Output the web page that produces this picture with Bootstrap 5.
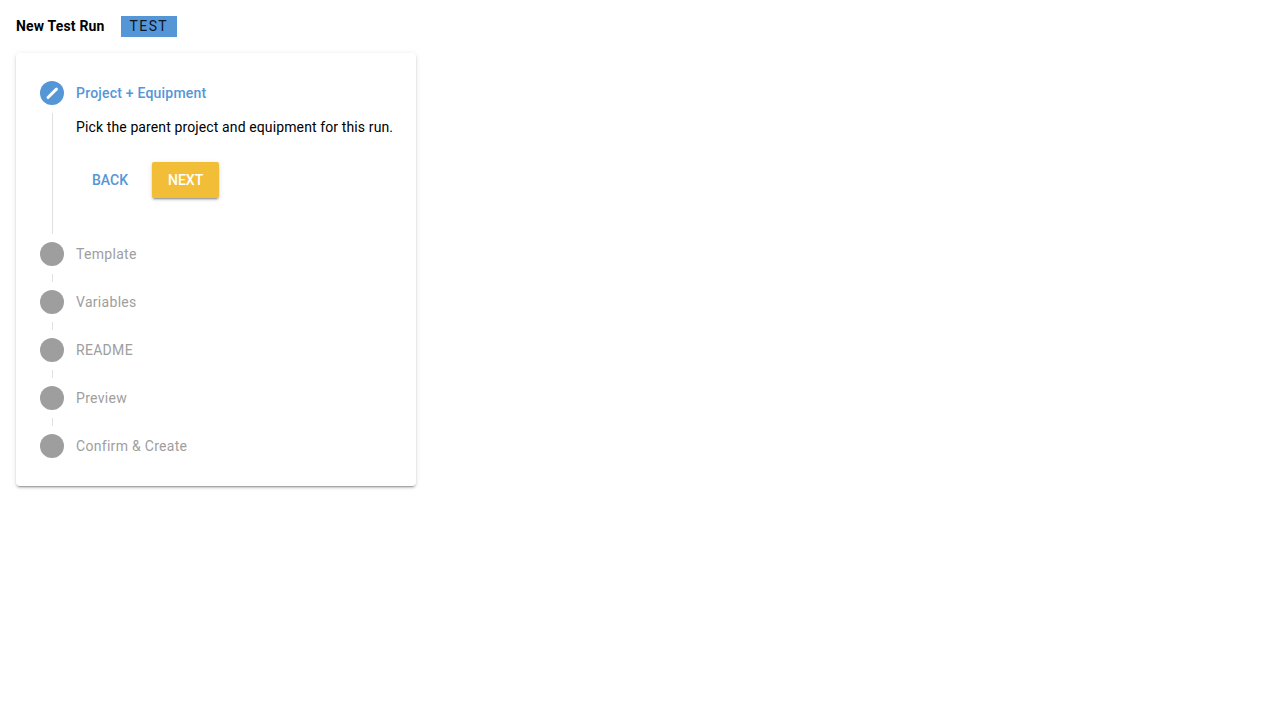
<!DOCTYPE html>
<html lang="en">
<head>
  <meta charset="UTF-8">
  <meta name="viewport" content="width=device-width, initial-scale=1.0">
  <title>New Test Run</title>
  <link href="https://cdn.jsdelivr.net/npm/bootstrap@5.3.1/dist/css/bootstrap.min.css" rel="stylesheet">
  <style>
    body {
      background-color: #fff;
      font-family: Roboto, sans-serif;
      font-size: 14px;
      color: #000;
    }
    .page-wrap {
      padding: 16px;
    }
    .page-title {
      font-size: 14px;
      font-weight: 700;
      line-height: 21px;
      letter-spacing: 0.17px;
      margin: 0;
    }
    .env-tag {
      background-color: #5596d7;
      color: rgba(0, 0, 0, 0.87);
      font-size: 14px;
      line-height: 21px;
      letter-spacing: 1.4px;
      padding: 0 9px;
      margin-left: 16px;
    }
    .stepper-card {
      width: 400px;
      margin-top: 16px;
      padding: 28px 24px;
      border-radius: 4px;
      box-shadow: 0 3px 1px -2px rgba(0,0,0,.2), 0 2px 2px 0 rgba(0,0,0,.14), 0 1px 5px 0 rgba(0,0,0,.12);
    }
    .step-head {
      height: 24px;
      line-height: 24px;
      color: #9e9e9e;
      letter-spacing: 0.3px;
    }
    .step-head.current {
      color: #5596d7;
      font-weight: 500;
      letter-spacing: 0.21px;
    }
    .step-dot {
      width: 24px;
      height: 24px;
      border-radius: 50%;
      background-color: #9e9e9e;
      margin-right: 12px;
      flex-shrink: 0;
    }
    .current .step-dot {
      background-color: #5596d7;
    }
    .step-link {
      width: 1px;
      height: 8px;
      margin: 8px 0 8px 12px;
      background-color: #e0e0e0;
    }
    .step-body {
      margin: 8px 0 8px 12px;
      height: 121px;
      padding: 4px 0 0 23px;
      border-left: 1px solid #e0e0e0;
      white-space: nowrap;
    }
    .step-body p {
      line-height: 20px;
      letter-spacing: 0.118px;
      margin: 0 0 25px;
    }
    .btn-back, .btn-next {
      height: 36px;
      padding: 0 16px;
      font-size: 14px;
      font-weight: 500;
      line-height: 36px;
      border: 0;
      border-radius: 2px;
    }
    .btn-back {
      color: #5596d7;
      background: transparent;
      margin-right: 8px;
    }
    .btn-next {
      color: #fff;
      background-color: #f2be37;
      box-shadow: 0 3px 1px -2px rgba(0,0,0,.2), 0 2px 2px 0 rgba(0,0,0,.14), 0 1px 5px 0 rgba(0,0,0,.12);
    }
  </style>
</head>
<body>
  <div class="page-wrap">
    <div class="d-flex align-items-center">
      <h1 class="page-title">New Test Run</h1>
      <span class="env-tag">TEST</span>
    </div>

    <div class="stepper-card bg-white">
      <div class="step-head current d-flex align-items-center">
        <span class="step-dot d-flex align-items-center justify-content-center">
          <svg width="24" height="24" viewBox="0 0 24 24" fill="none" stroke="#fff" stroke-width="3" stroke-linecap="round"><path d="M8 16.5 16.4 8.1"/></svg>
        </span>
        Project + Equipment
      </div>
      <div class="step-body">
        <p>Pick the parent project and equipment for this run.</p>
        <div class="d-flex">
          <button type="button" class="btn-back">BACK</button>
          <button type="button" class="btn-next">NEXT</button>
        </div>
      </div>

      <div class="step-head d-flex align-items-center"><span class="step-dot"></span>Template</div>
      <div class="step-link"></div>
      <div class="step-head d-flex align-items-center"><span class="step-dot"></span>Variables</div>
      <div class="step-link"></div>
      <div class="step-head d-flex align-items-center"><span class="step-dot"></span>README</div>
      <div class="step-link"></div>
      <div class="step-head d-flex align-items-center"><span class="step-dot"></span>Preview</div>
      <div class="step-link"></div>
      <div class="step-head d-flex align-items-center"><span class="step-dot"></span>Confirm &amp; Create</div>
    </div>
  </div>

  <script src="https://cdn.jsdelivr.net/npm/bootstrap@5.3.1/dist/js/bootstrap.bundle.min.js"></script>
</body>
</html>
